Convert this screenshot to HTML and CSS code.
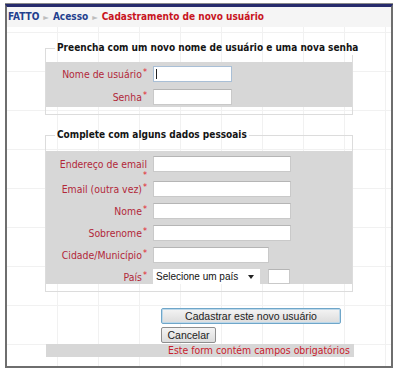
FILE: index.html
```html
<!DOCTYPE html>
<html lang="pt">
<head>
<meta charset="utf-8">
<title>Cadastramento de novo usuário</title>
<link rel="stylesheet" href="styles.css">
</head>
<body>
<div class="frame">
  <div class="crumb">
    <span class="home">FATTO</span><span class="sep">&#9658;</span><span class="link">Acesso</span><span class="sep">&#9658;</span><span class="here">Cadastramento de novo usuário</span>
  </div>
  <div class="content">
    <fieldset class="box box1">
      <legend>Preencha com um novo nome de usuário e uma nova senha</legend>
      <div class="panel panel1">
        <div class="row">
          <label class="lbl">Nome de usuário<span class="req">*</span></label>
          <div class="field short focus"><span class="caret"></span></div>
        </div>
        <div class="row">
          <label class="lbl">Senha<span class="req">*</span></label>
          <div class="field short"></div>
        </div>
      </div>
    </fieldset>

    <fieldset class="box box2">
      <legend>Complete com alguns dados pessoais</legend>
      <div class="panel panel2">
        <div class="row row-tall">
          <label class="lbl lbl-wrap">Endereço de email<br><span class="req">*</span></label>
          <div class="field long"></div>
        </div>
        <div class="row">
          <label class="lbl">Email (outra vez)<span class="req">*</span></label>
          <div class="field long"></div>
        </div>
        <div class="row">
          <label class="lbl">Nome<span class="req">*</span></label>
          <div class="field long"></div>
        </div>
        <div class="row">
          <label class="lbl">Sobrenome<span class="req">*</span></label>
          <div class="field long"></div>
        </div>
        <div class="row">
          <label class="lbl">Cidade/Município<span class="req">*</span></label>
          <div class="field mid"></div>
        </div>
        <div class="row row-last">
          <label class="lbl">País<span class="req">*</span></label>
          <div class="country">
            <div class="select"><span>Selecione um país</span><span class="arrow"></span></div>
            <div class="field tiny"></div>
          </div>
        </div>
      </div>
    </fieldset>

    <div class="actions">
      <button class="btn btn-main" type="button">Cadastrar este novo usuário</button>
      <button class="btn btn-cancel" type="button">Cancelar</button>
    </div>
    <div class="note">Este form contém campos obrigatórios</div>
  </div>
</div>
</body>
</html>
```

FILE: styles.css
```css
html, body {
  margin: 0;
  padding: 0;
  background: #ffffff;
}

.frame {
  box-sizing: border-box;
  width: 388px;
  height: 364px;
  margin: 4px 0 0 5px;
  border: 2px solid #6e6e6e;
  border-top: 3px solid #262b6c;
  box-shadow: 0 -1px 0 #8a8a8a;
  background-color: #ffffff;
  background-image:
    repeating-linear-gradient(90deg, transparent 0, transparent 40px, #f1f1f1 40px, #f1f1f1 41px),
    repeating-linear-gradient(0deg, transparent 0, transparent 38px, #f1f1f1 38px, #f1f1f1 39px);
  background-position: 10px 0, 0 17px;
  font-family: "DejaVu Sans Condensed", "DejaVu Sans", sans-serif;
  font-stretch: condensed;
}

.crumb {
  height: 20px;
  line-height: 20px;
  padding-left: 1px;
  background: #f5f5f5;
  font-size: 10px;
  font-weight: bold;
  white-space: nowrap;
}

.home, .link {
  color: #23408e;
}

.here {
  color: #c8141e;
}

.sep {
  color: #bdbdbd;
  font-size: 8px;
  margin: 0 4px;
  font-weight: normal;
}

.content {
  padding-left: 38px;
}

.box {
  box-sizing: border-box;
  width: 308px;
  margin: 0;
  padding: 0;
  border: 1px solid #dcdcdc;
  min-width: 0;
}

.box legend {
  margin-left: 9px;
  padding: 0 2px;
  font-size: 10px;
  line-height: 14px;
  height: 14px;
  font-weight: bold;
  color: #141414;
  white-space: nowrap;
}

.box1 {
  margin-top: 14px;
}

.box2 {
  margin-top: 13px;
}

.panel {
  background: #d7d7d7;
  margin-bottom: 7px;
}

.panel1 {
  margin-top: 7px;
  padding: 4px 0 2px;
}

.panel2 {
  margin-top: 9px;
  padding: 5px 0 0;
}

.row {
  display: grid;
  grid-template-columns: 101px auto;
  column-gap: 6px;
  align-items: start;
  height: 16px;
  margin-bottom: 6px;
}

.panel1 .row {
  margin-bottom: 7px;
}

.panel .row:last-child {
  margin-bottom: 0;
}

.panel2 .row-tall {
  height: 22px;
  margin-bottom: 3px;
}

.row-last {
  height: 15px;
}

.lbl {
  display: block;
  height: 16px;
  overflow: visible;
  text-align: right;
  font-size: 10.4px;
  line-height: 16px;
  color: #b2283a;
  white-space: nowrap;
}

.lbl-wrap {
  line-height: 10px;
  padding-top: 3px;
  height: 19px;
}

.req {
  color: #e2232e;
  font-size: 9px;
  line-height: 0;
  position: relative;
  top: -3px;
  margin-left: 1px;
}

.lbl-wrap .req {
  top: 0;
}

.field {
  box-sizing: border-box;
  height: 16px;
  background: #ffffff;
  border: 1px solid #c9c9c9;
  border-top-color: #b5b5b5;
  position: relative;
}

.short { width: 79px; }
.long { width: 138px; }
.mid { width: 116px; }
.tiny { width: 22px; height: 15px; }

.focus {
  border-color: #a9bfd6;
}

.caret {
  position: absolute;
  left: 2px;
  top: 2px;
  width: 1px;
  height: 10px;
  background: #222;
}

.country {
  display: flex;
  gap: 8px;
  align-items: start;
  height: 15px;
}

.select {
  box-sizing: border-box;
  width: 107px;
  height: 15px;
  background: #ffffff;
  display: flex;
  align-items: center;
  justify-content: space-between;
  padding: 0 6px 0 3px;
  font-family: "Liberation Sans", Arial, sans-serif;
  font-size: 10px;
  line-height: 15px;
  color: #111;
}

.arrow {
  width: 0;
  height: 0;
  border-left: 3px solid transparent;
  border-right: 3px solid transparent;
  border-top: 4px solid #222;
}

.actions {
  margin-top: 16px;
  padding-left: 116px;
  display: flex;
  flex-direction: column;
  align-items: flex-start;
  gap: 3px;
}

.btn {
  box-sizing: border-box;
  height: 16px;
  margin: 0;
  padding: 0 3px;
  font-family: "Liberation Sans", Arial, sans-serif;
  font-size: 10.5px;
  line-height: 14px;
  color: #222;
  background: linear-gradient(#f4f4f4, #dcdcdc);
  border: 1px solid #8e8e8e;
  border-radius: 2px;
}

.btn-main {
  width: 180px;
  border-color: #6fa6c9;
  box-shadow: 0 0 0 1px #bcd8ea inset;
}

.btn-cancel {
  width: 55px;
}

.note {
  box-sizing: border-box;
  width: 308px;
  height: 13px;
  margin-top: 1px;
  margin-left: 1px;
  background: #d7d7d7;
  padding-left: 122px;
  font-size: 10.4px;
  line-height: 13px;
  color: #c8202c;
  white-space: nowrap;
}
```
